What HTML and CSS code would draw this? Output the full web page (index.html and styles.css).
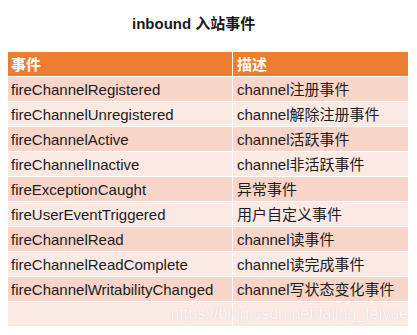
FILE: index.html
```html
<!DOCTYPE html>
<html>
<head>
<meta charset="utf-8">
<link rel="stylesheet" href="styles.css">
</head>
<body>
<div class="page">
  <div class="title">inbound 入站事件</div>
  <div class="table">
    <div class="cell head">事件</div><div class="cell head">描述</div>
    <div class="cell dark">fireChannelRegistered</div><div class="cell dark">channel注册事件</div>
    <div class="cell light">fireChannelUnregistered</div><div class="cell light">channel解除注册事件</div>
    <div class="cell dark">fireChannelActive</div><div class="cell dark">channel活跃事件</div>
    <div class="cell light">fireChannelInactive</div><div class="cell light">channel非活跃事件</div>
    <div class="cell dark">fireExceptionCaught</div><div class="cell dark">异常事件</div>
    <div class="cell light">fireUserEventTriggered</div><div class="cell light">用户自定义事件</div>
    <div class="cell dark">fireChannelRead</div><div class="cell dark">channel读事件</div>
    <div class="cell light">fireChannelReadComplete</div><div class="cell light">channel读完成事件</div>
    <div class="cell dark">fireChannelWritabilityChanged</div><div class="cell dark">channel写状态变化事件</div>
    <div class="cell light"></div><div class="cell light"></div>
    <div class="watermark">https://blog.csdn.net/fajing_feiyue</div>
  </div>
</div>
</body>
</html>
```
FILE: styles.css
```css
html, body {
  margin: 0;
  padding: 0;
  background: #ffffff;
}
.page {
  width: 417px;
  height: 335px;
  padding: 15px 10px 0 8px;
  box-sizing: border-box;
  font-family: "Liberation Sans", Arial, "Noto Sans CJK SC", sans-serif;
}
.title {
  padding-left: 124px;
  font-size: 15px;
  font-weight: bold;
  line-height: 17px;
  height: 17px;
  color: #1a1a1a;
  margin-bottom: 20px;
}
.table {
  position: relative;
  display: grid;
  grid-template-columns: 224px 175px;
  grid-auto-rows: 24px;
  column-gap: 1px;
  row-gap: 1px;
  width: 400px;
  background: #ffffff;
}
.cell {
  font-size: 15px;
  line-height: 22px;
  padding: 2px 0 0 3px;
  box-sizing: border-box;
  color: #1c1c1c;
  white-space: nowrap;
  overflow: hidden;
}
.cell:nth-child(2n) {
  padding-left: 4px;
}
.head {
  background: #ed7d31;
  color: #ffffff;
  font-weight: bold;
}
.dark {
  background: #f8d5c9;
}
.light {
  background: #fbe9e4;
}
.watermark {
  position: absolute;
  right: 0;
  bottom: 2px;
  font-size: 16px;
  line-height: 20px;
  color: rgba(255, 255, 255, 0.85);
  text-shadow: 0 0 1px rgba(120, 100, 100, 0.25);
  white-space: nowrap;
}
```
